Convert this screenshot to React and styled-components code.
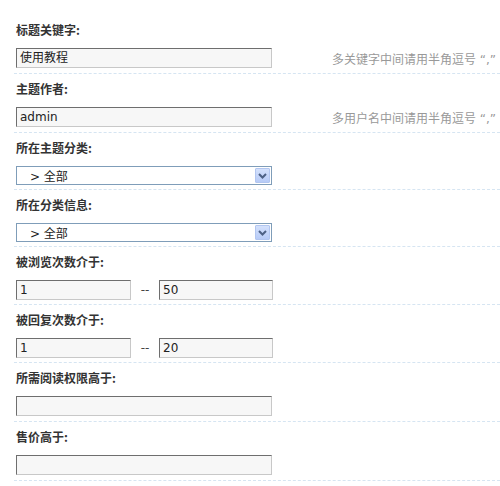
import React from "react";
import styled, { createGlobalStyle } from "styled-components";

const GlobalStyle = createGlobalStyle`
  html, body {
    margin: 0;
    padding: 0;
    background: #fff;
    overflow: hidden;
  }
  body {
    font-family: "DejaVu Sans", "Noto Sans CJK SC", sans-serif;
    font-size: 12px;
    color: #333;
  }
`;

const items = [
    { label: "标题关键字:", type: "text", value: "使用教程", hint: "多关键字中间请用半角逗号 “,”" },
    { label: "主题作者:", type: "text", value: "admin", hint: "多用户名中间请用半角逗号 “,”" },
    { label: "所在主题分类:", type: "select", value: "> 全部" },
    { label: "所在分类信息:", type: "select", value: "> 全部" },
    { label: "被浏览次数介于:", type: "range", from: "1", to: "50" },
    { label: "被回复次数介于:", type: "range", from: "1", to: "20" },
    { label: "所需阅读权限高于:", type: "text", value: "" },
    { label: "售价高于:", type: "text", value: "" },
];

const App = () => {
    return (
        <>
            <GlobalStyle />
            <SearchForm>
                {items.map((item) => (
                    <Item key={item.label} $pad={item.type === "text" ? 5 : 4}>
                        <Label>{item.label}</Label>
                        {item.type === "text" && (
                            <Row>
                                <TextBox>{item.value}</TextBox>
                                {item.hint && <Hint>{item.hint}</Hint>}
                            </Row>
                        )}
                        {item.type === "select" && (
                            <Select>
                                <SelectText>{item.value}</SelectText>
                                <SelectArrow>
                                    <svg width="9" height="6" viewBox="0 0 9 6">
                                        <path d="M1 1 L4.5 4.5 L8 1" fill="none" stroke="#4d6185" strokeWidth="2" />
                                    </svg>
                                </SelectArrow>
                            </Select>
                        )}
                        {item.type === "range" && (
                            <Row>
                                <TextBox $width={115}>{item.from}</TextBox>
                                <Dash>--</Dash>
                                <TextBox $width={114}>{item.to}</TextBox>
                            </Row>
                        )}
                    </Item>
                ))}
            </SearchForm>
        </>
    );
};

export default App;

const SearchForm = styled.ul`
    list-style: none;
    margin: 0;
    padding: 15px 0 0 14px;
    width: 486px;
`;

const Item = styled.li`
    padding: 3px 0 ${({ $pad }) => $pad}px 2px;
    border-bottom: 1px dashed #d6e5f2;
`;

const Label = styled.div`
    font-family: "Noto Sans CJK SC", sans-serif;
    font-weight: 700;
    font-size: 12px;
    line-height: 24px;
    color: #333;
    margin-bottom: 6px;
`;

const Row = styled.div`
    display: flex;
    align-items: center;
`;

const TextBox = styled.div`
    box-sizing: border-box;
    flex: none;
    width: ${({ $width }) => ($width ? `${$width}px` : "256px")};
    height: 20px;
    padding: 0 3px;
    background: #f7f7f7;
    border-top: 1px solid #6e6e6e;
    border-left: 1px solid #6e6e6e;
    border-right: 1px solid #c8c8c8;
    border-bottom: 1px solid #c8c8c8;
    font-size: 12px;
    line-height: 18px;
    color: #222;
    white-space: nowrap;
`;

const Hint = styled.span`
    margin-left: 60px;
    color: #999;
    font-size: 12px;
    white-space: nowrap;
    font-family: "DejaVu Sans", "Noto Sans CJK SC", sans-serif;
`;

const Dash = styled.span`
    width: 28px;
    text-align: center;
    color: #444;
    font-size: 12px;
`;

const Select = styled.div`
    box-sizing: border-box;
    width: 256px;
    height: 19px;
    display: flex;
    align-items: center;
    justify-content: space-between;
    border: 1px solid #7f9db9;
    background: #fff;
    padding: 0 1px 0 13px;
`;

const SelectText = styled.span`
    font-size: 12px;
    color: #222;
    white-space: pre;
`;

const SelectArrow = styled.span`
    box-sizing: border-box;
    width: 15px;
    height: 15px;
    display: flex;
    align-items: center;
    justify-content: center;
    background: linear-gradient(#d4e1fc, #b7cbf7);
    border: 1px solid #b2c6f0;
    border-radius: 1px;
`;
